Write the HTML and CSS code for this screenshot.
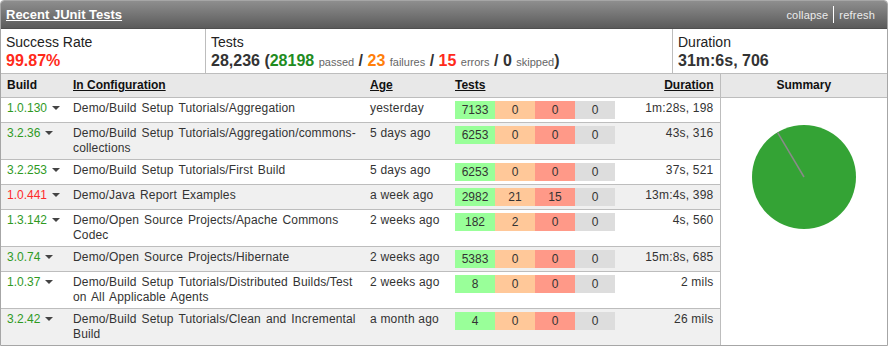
FILE: index.html
```html
<!DOCTYPE html>
<html lang="en">
<head>
  <meta charset="utf-8">
  <title>Recent JUnit Tests</title>
  <link rel="stylesheet" href="styles.css">
</head>
<body>
  <div class="portlet">
    <!-- Заголовок виджета -->
    <div class="portlet-header">
      <a class="portlet-title" href="#">Recent JUnit Tests</a>
      <div class="portlet-actions">
        <a href="#">collapse</a>
        <span class="actions-sep"></span>
        <a href="#">refresh</a>
      </div>
    </div>

    <!-- Сводка -->
    <div class="stats">
      <div class="stat stat-rate">
        <div class="stat-label">Success Rate</div>
        <div class="stat-value value-red">99.87%</div>
      </div>
      <div class="stat stat-tests">
        <div class="stat-label">Tests</div>
        <div class="stat-value">28,236 (<span class="value-green">28198</span> <small>passed</small> / <span class="value-orange">23</span> <small>failures</small> / <span class="value-red">15</span> <small>errors</small> / 0 <small>skipped</small>)</div>
      </div>
      <div class="stat stat-duration">
        <div class="stat-label">Duration</div>
        <div class="stat-value">31m:6s, 706</div>
      </div>
    </div>

    <table class="results">
      <colgroup>
        <col class="col-build">
        <col class="col-config">
        <col class="col-age">
        <col class="col-tests">
        <col class="col-duration">
        <col>
      </colgroup>
      <thead>
        <tr>
          <th><a href="#" class="plain">Build</a></th>
          <th><a href="#">In Configuration</a></th>
          <th><a href="#">Age</a></th>
          <th><a href="#">Tests</a></th>
          <th class="right"><a href="#">Duration</a></th>
          <th class="summary-head">Summary</th>
        </tr>
      </thead>
      <tbody>
        <tr>
          <td class="build-cell"><a class="build ok" href="#">1.0.130</a><span class="caret"></span></td>
          <td class="config">Demo/Build Setup Tutorials/Aggregation</td>
          <td>yesterday</td>
          <td><div class="bar"><span class="passed">7133</span><span class="failed">0</span><span class="error">0</span><span class="skipped">0</span></div></td>
          <td class="right">1m:28s, 198</td>
          <td class="summary" rowspan="8">
            <svg class="pie" width="106" height="106" viewBox="0 0 106 106">
              <circle cx="53" cy="53" r="52" fill="#34a335"/>
              <line x1="53" y1="53" x2="26.5" y2="8.3" stroke="#8a8a8a" stroke-width="1.5"/>
            </svg>
          </td>
        </tr>
        <tr>
          <td class="build-cell"><a class="build ok" href="#">3.2.36</a><span class="caret"></span></td>
          <td class="config">Demo/Build Setup Tutorials/Aggregation/commons-collections</td>
          <td>5 days ago</td>
          <td><div class="bar"><span class="passed">6253</span><span class="failed">0</span><span class="error">0</span><span class="skipped">0</span></div></td>
          <td class="right">43s, 316</td>
        </tr>
        <tr>
          <td class="build-cell"><a class="build ok" href="#">3.2.253</a><span class="caret"></span></td>
          <td class="config">Demo/Build Setup Tutorials/First Build</td>
          <td>5 days ago</td>
          <td><div class="bar"><span class="passed">6253</span><span class="failed">0</span><span class="error">0</span><span class="skipped">0</span></div></td>
          <td class="right">37s, 521</td>
        </tr>
        <tr>
          <td class="build-cell"><a class="build fail" href="#">1.0.441</a><span class="caret"></span></td>
          <td class="config">Demo/Java Report Examples</td>
          <td>a week ago</td>
          <td><div class="bar"><span class="passed">2982</span><span class="failed">21</span><span class="error">15</span><span class="skipped">0</span></div></td>
          <td class="right">13m:4s, 398</td>
        </tr>
        <tr>
          <td class="build-cell"><a class="build ok" href="#">1.3.142</a><span class="caret"></span></td>
          <td class="config">Demo/Open Source Projects/Apache Commons Codec</td>
          <td>2 weeks ago</td>
          <td><div class="bar"><span class="passed">182</span><span class="failed">2</span><span class="error">0</span><span class="skipped">0</span></div></td>
          <td class="right">4s, 560</td>
        </tr>
        <tr>
          <td class="build-cell"><a class="build ok" href="#">3.0.74</a><span class="caret"></span></td>
          <td class="config">Demo/Open Source Projects/Hibernate</td>
          <td>2 weeks ago</td>
          <td><div class="bar"><span class="passed">5383</span><span class="failed">0</span><span class="error">0</span><span class="skipped">0</span></div></td>
          <td class="right">15m:8s, 685</td>
        </tr>
        <tr>
          <td class="build-cell"><a class="build ok" href="#">1.0.37</a><span class="caret"></span></td>
          <td class="config">Demo/Build Setup Tutorials/Distributed Builds/Test on All Applicable Agents</td>
          <td>2 weeks ago</td>
          <td><div class="bar"><span class="passed">8</span><span class="failed">0</span><span class="error">0</span><span class="skipped">0</span></div></td>
          <td class="right">2 mils</td>
        </tr>
        <tr>
          <td class="build-cell"><a class="build ok" href="#">3.2.42</a><span class="caret"></span></td>
          <td class="config">Demo/Build Setup Tutorials/Clean and Incremental Build</td>
          <td>a month ago</td>
          <td><div class="bar"><span class="passed">4</span><span class="failed">0</span><span class="error">0</span><span class="skipped">0</span></div></td>
          <td class="right">26 mils</td>
        </tr>
      </tbody>
    </table>
  </div>
</body>
</html>
```

FILE: styles.css
```css
*, *::before, *::after {
  margin: 0;
  padding: 0;
  box-sizing: border-box;
}

body {
  background-color: #ffffff;
  color: #333333;
  font-family: "Liberation Sans", Arial, sans-serif;
  font-size: 12px;
}

a {
  color: inherit;
}

.portlet {
  width: 888px;
  border: 1px solid #a6a6a6;
  border-radius: 4px 4px 0 0;
  box-shadow: 0 1px 1px #c8c8c8;
  overflow: hidden;
}

.portlet-header {
  display: flex;
  align-items: center;
  justify-content: space-between;
  height: 27px;
  padding: 0 12px 0 5px;
  background: linear-gradient(#8e8e8e, #5b5b5b);
}

.portlet-title {
  color: #ffffff;
  font-size: 13px;
  font-weight: bold;
}

.portlet-actions {
  display: flex;
  align-items: center;
  gap: 5px;
  letter-spacing: 0.2px;
}

.portlet-actions a {
  color: #ececec;
  font-size: 11px;
  text-decoration: none;
}

.actions-sep {
  width: 1px;
  height: 17px;
  background-color: #ffffff;
}

.stats {
  display: flex;
  height: 46px;
  border-top: 1px solid #4f4f4f;
  border-bottom: 1px solid #bdbdbd;
}

.stat {
  padding: 5px 5px 0;
}

.stat-rate {
  width: 205px;
  border-right: 1px solid #bdbdbd;
}

.stat-tests {
  width: 467px;
  border-right: 1px solid #bdbdbd;
}

.stat-duration {
  flex: 1;
}

.stat-label {
  font-size: 14px;
  line-height: 17px;
  color: #222222;
}

.stat-value {
  font-size: 16px;
  font-weight: bold;
  line-height: 19px;
  color: #333333;
}

.stat-value small {
  font-size: 11px;
  font-weight: normal;
  color: #666666;
}

.value-red {
  color: #ff2a1a;
}

.value-green {
  color: #1f8c1f;
}

.value-orange {
  color: #ff7f0a;
}

.results {
  width: 100%;
  border-collapse: collapse;
  table-layout: fixed;
}

.col-build {
  width: 66px;
}

.col-config {
  width: 297px;
}

.col-age {
  width: 85px;
}

.col-tests {
  width: 171px;
}

.col-duration {
  width: 100px;
}

.results th {
  height: 23px;
  padding: 0 6px;
  background-color: #e8e8e8;
  border-bottom: 1px solid #bdbdbd;
  color: #111111;
  font-weight: bold;
  text-align: left;
}

.results th a.plain {
  text-decoration: none;
}

.results th.summary-head {
  text-align: center;
  border-left: 1px solid #bdbdbd;
}

.results td {
  padding: 3px 6px;
  line-height: 15px;
  letter-spacing: 0.2px;
  vertical-align: top;
  border-top: 1px solid #bdbdbd;
}

.results td.build-cell {
  padding-right: 0;
  white-space: nowrap;
  letter-spacing: 0;
}

.results td.config {
  letter-spacing: 0.15px;
  word-spacing: 1.5px;
}

.results tbody tr:nth-child(even) td {
  background-color: #f0f0f0;
}

.results tbody tr:first-child td {
  border-top: none;
}

.results td.summary,
.results tbody tr:nth-child(even) td.summary {
  padding: 26px 0 0;
  background-color: #ffffff;
  border-left: 1px solid #bdbdbd;
  text-align: center;
}

.right,
.results th.right {
  text-align: right;
}

.build {
  text-decoration: none;
}

.build.ok {
  color: #2f9a1f;
}

.build.fail {
  color: #ff2a2a;
}

.caret {
  display: inline-block;
  margin-left: 5px;
  vertical-align: middle;
  border-left: 4px solid transparent;
  border-right: 4px solid transparent;
  border-top: 4px solid #444444;
}

.bar {
  display: flex;
  width: 160px;
  height: 18px;
  letter-spacing: 0;
}

.bar span {
  width: 40px;
  line-height: 18px;
  text-align: center;
}

.passed {
  background-color: #99ff99;
}

.failed {
  background-color: #ffc899;
}

.error {
  background-color: #ff9988;
}

.skipped {
  background-color: #dddddd;
}

.pie {
  display: block;
  margin: 0 auto;
}
```
